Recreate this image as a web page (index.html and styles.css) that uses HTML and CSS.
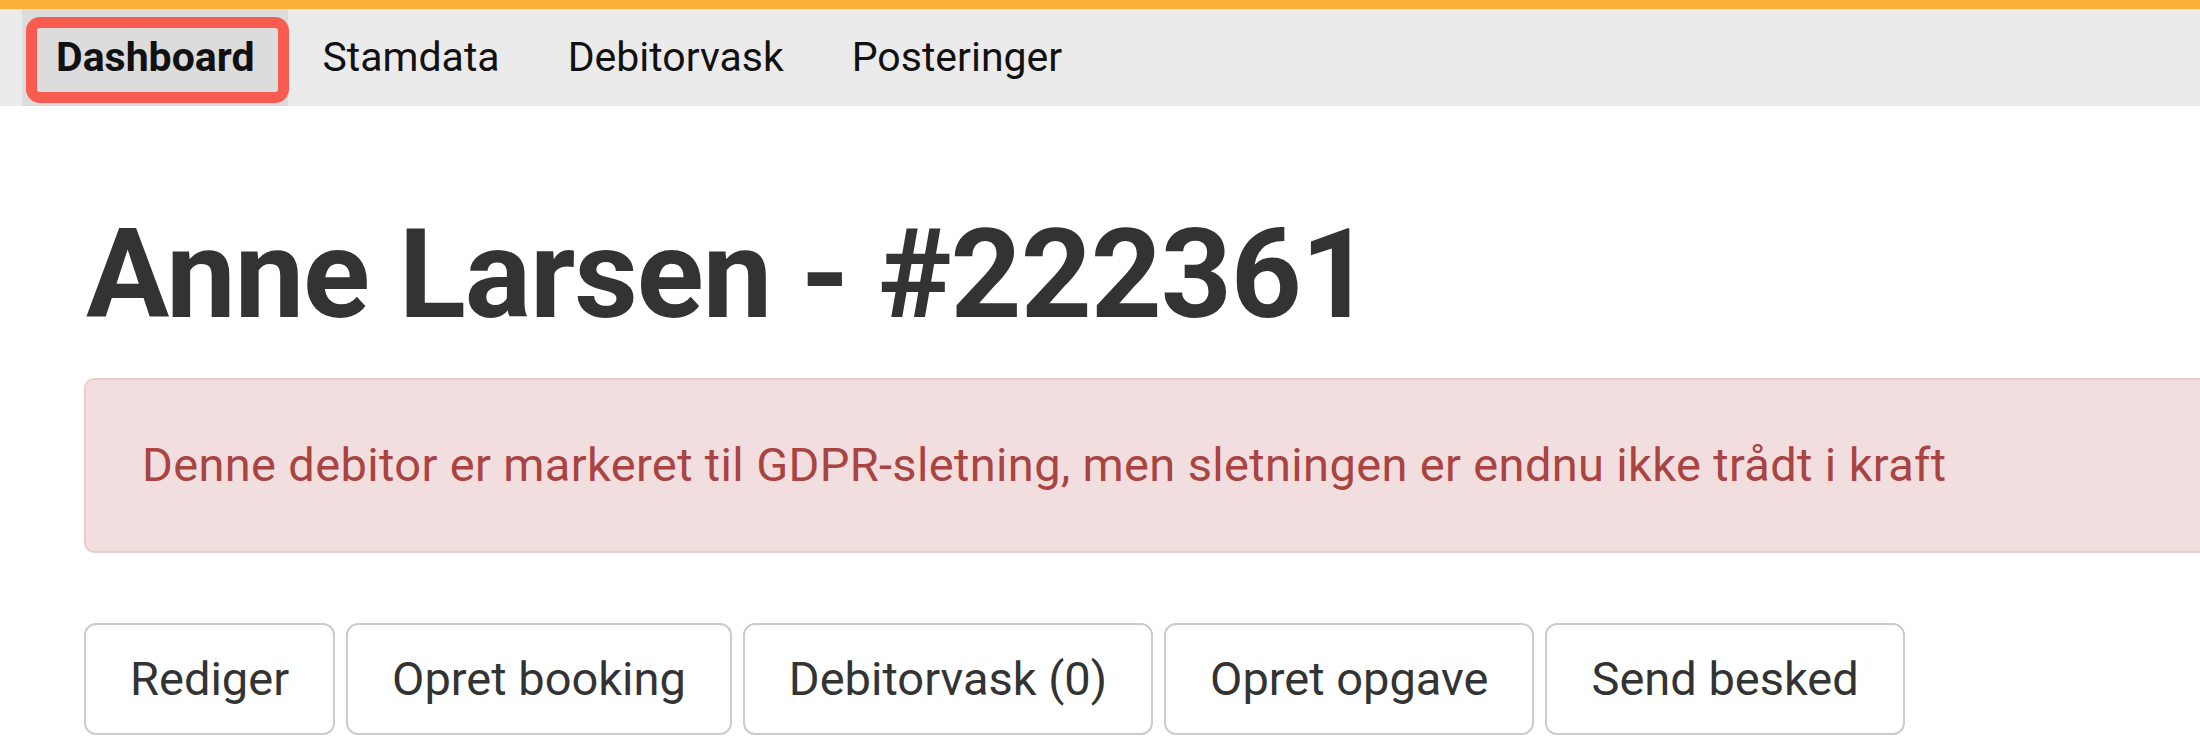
FILE: index.html
```html
<!DOCTYPE html>
<html>
<head>
    <title>Anne Larsen - #222361</title>
    <meta charset="UTF-8">
    <meta name="viewport" content="width=device-width, initial-scale=1.0">
    <link rel="stylesheet" href="styles.css">
</head>
<body>
<div class="topbar"></div>
<nav class="tabs">
    <a class="tab active" href="#">Dashboard</a>
    <a class="tab" href="#">Stamdata</a>
    <a class="tab" href="#">Debitorvask</a>
    <a class="tab" href="#">Posteringer</a>
</nav>
<main class="content">
    <h1 class="title">Anne Larsen - #222361</h1>
    <div class="alert">Denne debitor er markeret til GDPR-sletning, men sletningen er endnu ikke trådt i kraft</div>
    <div class="actions">
        <button class="btn">Rediger</button>
        <button class="btn">Opret booking</button>
        <button class="btn">Debitorvask (0)</button>
        <button class="btn">Opret opgave</button>
        <button class="btn">Send besked</button>
    </div>
</main>
</body>
</html>
```

FILE: styles.css
```css
body {
    margin: 0;
    background-color: #fff;
    font-family: Roboto, "Liberation Sans", Arial, sans-serif;
    overflow: hidden;
}

.topbar {
    height: 9px;
    background-color: #fcb23a;
    box-shadow: 0 1px 2px rgba(0, 0, 0, 0.08);
}

.tabs {
    display: flex;
    height: 97px;
    padding-left: 22px;
    background-color: #ebebeb;
}

.tab {
    position: relative;
    padding: 0 34px;
    line-height: 97px;
    font-size: 41px;
    color: #111;
    text-decoration: none;
}

.tab.active {
    font-weight: 700;
    background-color: #dcdcdc;
}

/* red highlight box round the active tab */
.tab.active::after {
    content: "";
    position: absolute;
    top: 8px;
    bottom: 3px;
    left: 4px;
    right: -1px;
    border: 11px solid #f85b50;
    border-radius: 14px;
}

.content {
    padding-left: 84px;
}

.title {
    margin: 101px 0 0 2px;
    font-size: 124px;
    line-height: 1.1;
    font-weight: 700;
    letter-spacing: -1.1px;
    color: #333;
}

.alert {
    margin: 35px -40px 0 0;
    padding: 54px 56px;
    border: 2px solid #ebccd1;
    border-radius: 10px;
    background-color: #f2dede;
    color: #a94442;
    font-size: 47px;
    line-height: 1.34;
    letter-spacing: 0.35px;
}

.actions {
    display: flex;
    gap: 11px;
    margin-top: 70px;
}

.btn {
    padding: 21px 44px;
    border: 2px solid #ccc;
    border-radius: 12px;
    background-color: #fff;
    color: #333;
    font-family: Roboto, "Liberation Sans", Arial, sans-serif;
    font-size: 47px;
    line-height: 1.4;
}
```
